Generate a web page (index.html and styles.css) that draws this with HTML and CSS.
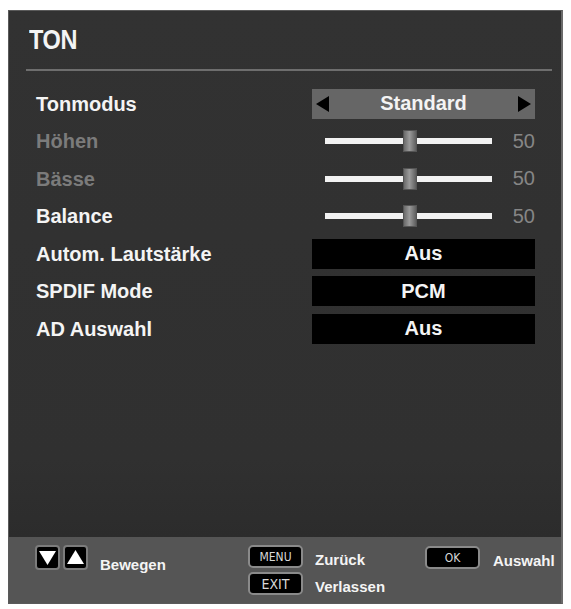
FILE: index.html
```html
<!DOCTYPE html>
<html lang="de">
<head>
<meta charset="utf-8">
<title>TON</title>
<link rel="stylesheet" href="styles.css">
</head>
<body>
<div class="panel">
  <div class="main">
    <div class="title"><span class="title-text">TON</span></div>
    <div class="sep"></div>
    <div class="list">
      <div class="row">
        <span class="label">Tonmodus</span>
        <div class="ctrl select">
          <span class="arr arr-l"></span>
          <span class="val">Standard</span>
          <span class="arr arr-r"></span>
        </div>
      </div>
      <div class="row">
        <span class="label dim">Höhen</span>
        <div class="ctrl slider">
          <div class="track"><span class="thumb"></span></div>
          <span class="num">50</span>
        </div>
      </div>
      <div class="row">
        <span class="label dim">Bässe</span>
        <div class="ctrl slider">
          <div class="track"><span class="thumb"></span></div>
          <span class="num">50</span>
        </div>
      </div>
      <div class="row">
        <span class="label">Balance</span>
        <div class="ctrl slider">
          <div class="track"><span class="thumb"></span></div>
          <span class="num">50</span>
        </div>
      </div>
      <div class="row">
        <span class="label">Autom. Lautstärke</span>
        <div class="ctrl box">Aus</div>
      </div>
      <div class="row">
        <span class="label">SPDIF Mode</span>
        <div class="ctrl box">PCM</div>
      </div>
      <div class="row">
        <span class="label">AD Auswahl</span>
        <div class="ctrl box">Aus</div>
      </div>
    </div>
  </div>
  <div class="footer">
    <div class="grp nav">
      <span class="abox"><svg width="19" height="17" viewBox="0 0 19 17"><polygon points="1,2 18,2 9.5,16" fill="#fff"/></svg></span>
      <span class="abox"><svg width="19" height="17" viewBox="0 0 19 17"><polygon points="1,15 18,15 9.5,1" fill="#fff"/></svg></span>
      <span class="ftxt move">Bewegen</span>
    </div>
    <div class="grp keys">
      <div class="keycol">
        <span class="key">MENU</span>
        <span class="key key-big">EXIT</span>
      </div>
      <div class="keylabels">
        <span class="ftxt">Zurück</span>
        <span class="ftxt">Verlassen</span>
      </div>
    </div>
    <div class="grp ok">
      <span class="key okkey">OK</span>
      <span class="ftxt">Auswahl</span>
    </div>
  </div>
</div>
</body>
</html>
```
FILE: styles.css
```css
html, body {
  margin: 0;
  padding: 0;
  background: #ffffff;
}
body {
  font-family: "Liberation Sans", Arial, sans-serif;
  font-weight: bold;
  color: #f4f4f4;
}
.panel {
  margin: 10px 0 0 8px;
  width: 555px;
  height: 594px;
  box-sizing: border-box;
  border: 1px solid #5a5a5a;
  border-right: 2px solid #6a6a6a;
  background: #313131;
  display: flex;
  flex-direction: column;
}
.main {
  flex: 1;
  background: linear-gradient(#323232, #303030 85%, #2c2c2c);
}
.title {
  padding: 14px 0 0 20px;
  height: 30px;
  font-size: 28px;
  line-height: 30px;
}
.title-text {
  display: inline-block;
  transform: scaleX(0.84);
  transform-origin: left center;
  letter-spacing: -0.5px;
}
.sep {
  margin: 14px 9px 0 17px;
  height: 2px;
  background: #6e6e6e;
}
.list {
  padding-top: 14px;
}
.row {
  height: 37.5px;
  display: flex;
  align-items: center;
  justify-content: space-between;
  padding: 0 26px 0 27px;
}
.label {
  font-size: 20px;
  line-height: 24px;
}
.label.dim {
  color: #7b7b7b;
}
.ctrl {
  width: 223px;
  height: 30px;
  box-sizing: border-box;
}
.select {
  background: #666666;
  display: flex;
  align-items: center;
  justify-content: space-between;
  padding: 0 4px 0 4px;
}
.val {
  font-size: 20px;
  color: #f4f4f4;
}
.arr {
  width: 0;
  height: 0;
  border-top: 8px solid transparent;
  border-bottom: 8px solid transparent;
}
.arr-l {
  border-right: 13px solid #000;
}
.arr-r {
  border-left: 13px solid #000;
}
.slider {
  display: flex;
  align-items: center;
  padding-left: 13px;
}
.track {
  width: 167px;
  height: 6px;
  background: #f2f2f2;
  display: flex;
  align-items: center;
  justify-content: center;
  padding-left: 2px;
  box-sizing: border-box;
}
.thumb {
  width: 14px;
  height: 22px;
  box-sizing: border-box;
  background: linear-gradient(90deg, #6a6a6a, #9a9a9a 45%, #8a8a8a 60%, #5e5e5e);
  border: 1px solid #555;
}
.num {
  flex: 1;
  text-align: right;
  font-size: 20px;
  font-weight: normal;
  color: #868686;
}
.box {
  background: #000;
  display: flex;
  align-items: center;
  justify-content: center;
  font-size: 20px;
}
.footer {
  height: 66px;
  flex: none;
  background: #555555;
  display: flex;
  align-items: flex-start;
  padding: 8px 0 0 26px;
  box-sizing: border-box;
}
.grp {
  display: flex;
  align-items: flex-start;
}
.nav {
  width: 213px;
}
.abox {
  width: 25px;
  height: 25px;
  box-sizing: border-box;
  background: #000;
  border: 2px solid #7c7c7c;
  border-radius: 4px;
  display: flex;
  align-items: center;
  justify-content: center;
  margin-right: 3px;
}
.ftxt {
  font-size: 15px;
  line-height: 18px;
  color: #f4f4f4;
}
.move {
  margin: 11px 0 0 9px;
}
.keys {
  width: 177px;
}
.keycol {
  display: flex;
  flex-direction: column;
  gap: 4px;
}
.key {
  width: 55px;
  height: 23px;
  box-sizing: border-box;
  background: #000;
  border: 2px solid #8a8a8a;
  border-radius: 5px;
  display: flex;
  align-items: center;
  justify-content: center;
  font-family: "DejaVu Sans Condensed", "DejaVu Sans", sans-serif;
  font-stretch: condensed;
  font-weight: normal;
  font-size: 12px;
  color: #d8d8d8;
}
.key-big {
  font-size: 14px;
}
.keylabels {
  display: flex;
  flex-direction: column;
  margin-left: 12px;
  padding-top: 6px;
  gap: 9px;
}
.ok {
  padding-top: 1px;
}
.okkey {
  margin-right: 13px;
}
.ok .ftxt {
  margin-top: 6px;
}
```
